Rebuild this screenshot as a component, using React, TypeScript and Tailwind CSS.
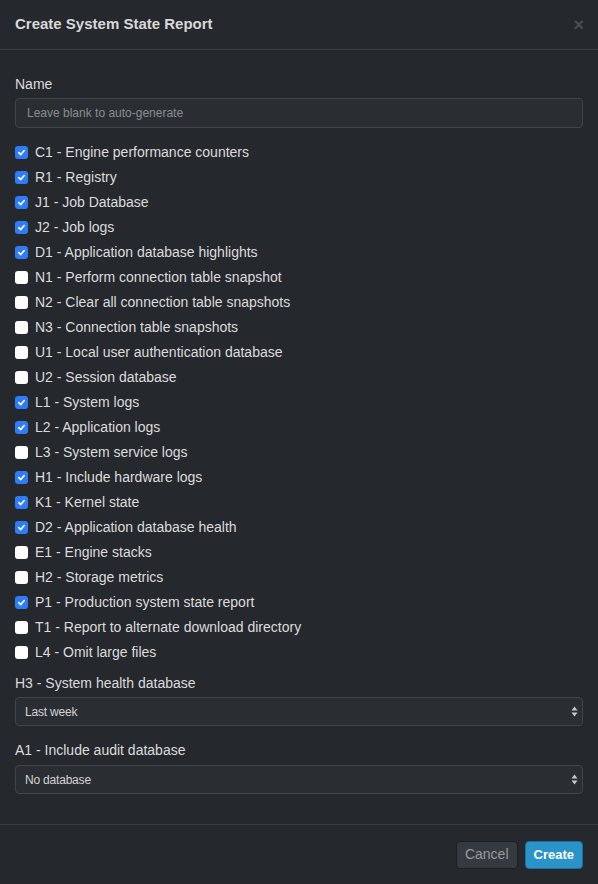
import React from "react";

const options: [string, boolean][] = [
  ["C1 - Engine performance counters", true],
  ["R1 - Registry", true],
  ["J1 - Job Database", true],
  ["J2 - Job logs", true],
  ["D1 - Application database highlights", true],
  ["N1 - Perform connection table snapshot", false],
  ["N2 - Clear all connection table snapshots", false],
  ["N3 - Connection table snapshots", false],
  ["U1 - Local user authentication database", false],
  ["U2 - Session database", false],
  ["L1 - System logs", true],
  ["L2 - Application logs", true],
  ["L3 - System service logs", false],
  ["H1 - Include hardware logs", true],
  ["K1 - Kernel state", true],
  ["D2 - Application database health", true],
  ["E1 - Engine stacks", false],
  ["H2 - Storage metrics", false],
  ["P1 - Production system state report", true],
  ["T1 - Report to alternate download directory", false],
  ["L4 - Omit large files", false],
];

function Check({ checked }: { checked: boolean }) {
  if (checked) {
    return (
      <span className="flex h-[13px] w-[13px] items-center justify-center rounded-[3px] bg-[#2f7df6]">
        <svg width="9" height="9" viewBox="0 0 10 10">
          <path d="M2 5.2 L4.2 7.3 L8 2.8" fill="none" stroke="white" strokeWidth="1.8" strokeLinecap="round" strokeLinejoin="round" />
        </svg>
      </span>
    );
  }
  return <span className="h-[13px] w-[13px] rounded-[3px] bg-white" />;
}

function Select({ value }: { value: string }) {
  return (
    <div className="flex h-[29px] items-center justify-between rounded-[4px] border border-[#40454c] bg-[#2a2d32] pl-[9px] pr-[4px] text-[12px] text-[#d4d4d4]">
      <span className="tracking-[-0.2px]">{value}</span>
      <svg width="7" height="11" viewBox="0 0 7 11">
        <path d="M3.5 0.5 L6.5 4.5 L0.5 4.5 Z" fill="#c8c8c8" />
        <path d="M3.5 10.5 L6.5 6.5 L0.5 6.5 Z" fill="#c8c8c8" />
      </svg>
    </div>
  );
}

export default function App() {
  return (
    <div className="flex h-[884px] w-[598px] flex-col bg-[#25282d] font-['Liberation_Sans',Arial,sans-serif] text-[14px] text-[#dcdcdc]">
      <div className="flex h-[50px] items-center justify-between border-b border-[#3a3e44] pl-[15px] pr-[14px]">
        <h1 className="text-[15px] font-bold text-[#d8d8d8]">Create System State Report</h1>
        <span className="text-[18px] font-bold leading-none text-[#4a4e54]">×</span>
      </div>

      <div className="flex flex-1 flex-col border-b border-[#3a3e44] px-[15px] pt-[25px]">
        <label className="leading-[18px]">Name</label>
        <input
          className="mt-[5px] h-[30px] rounded-[4px] border border-[#40454c] bg-[#2a2d32] px-[11px] text-[12px] text-[#ddd] placeholder:text-[#8a8d92] focus:outline-none"
          placeholder="Leave blank to auto-generate"
        />
        <div className="mt-[12px] flex flex-col">
          {options.map(([label, checked]) => (
            <div key={label} className="flex h-[25px] items-center gap-[7px]">
              <Check checked={checked} />
              <span>{label}</span>
            </div>
          ))}
        </div>
        <label className="mt-[9px] leading-[18px]">H3 - System health database</label>
        <div className="mt-[5px]">
          <Select value="Last week" />
        </div>
        <label className="mt-[15px] leading-[18px]">A1 - Include audit database</label>
        <div className="mt-[6px]">
          <Select value="No database" />
        </div>
      </div>

      <div className="flex h-[59px] items-center justify-end gap-[7px] px-[15px]">
        <button className="h-[28px] rounded-[4px] border border-[#1c1e22] bg-[#353940] px-[8px] text-[14px] text-[#9a9a9a]">
          Cancel
        </button>
        <button className="h-[28px] rounded-[4px] border border-[#1f6f9a] bg-[#2a93c8] px-[8px] text-[13px] font-bold text-white">
          Create
        </button>
      </div>
    </div>
  );
}
